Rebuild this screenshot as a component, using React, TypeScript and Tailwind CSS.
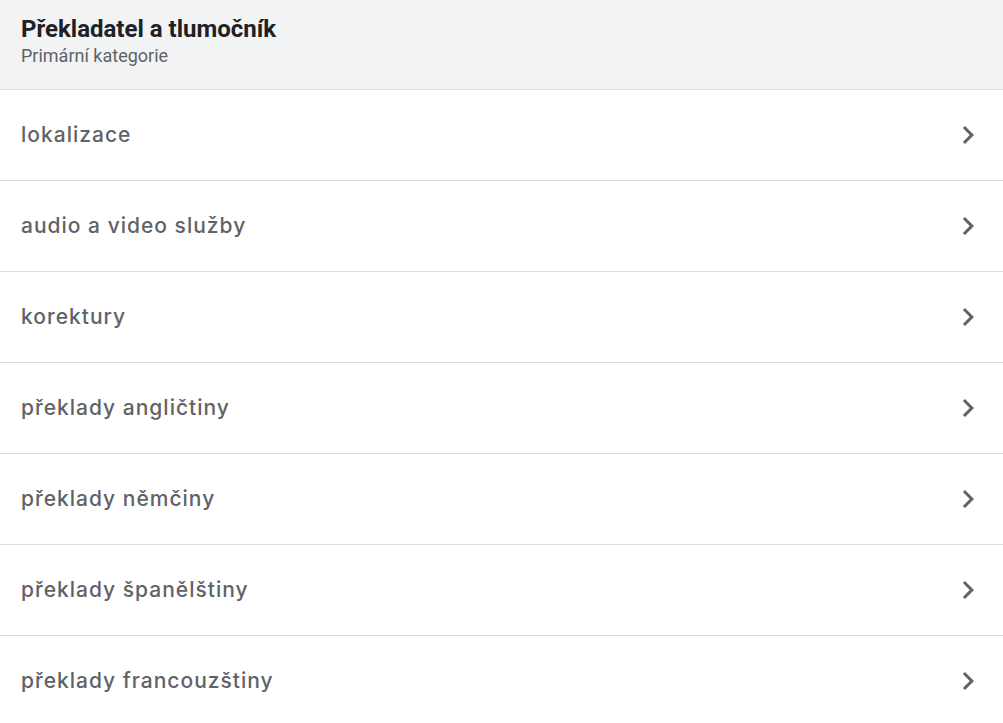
const ITEMS = [
	'lokalizace',
	'audio a video služby',
	'korektury',
	'překlady angličtiny',
	'překlady němčiny',
	'překlady španělštiny',
	'překlady francouzštiny',
]

function CategoryRow({ label }: { label: string }) {
	return (
		<div className="flex h-[91px] items-center justify-between border-b border-[#dadce0] pl-[21px] pr-[17px]">
			<span
				className="text-[21px] font-medium tracking-[1px] text-[#5f6368]"
				style={{ fontFamily: 'Inter, sans-serif' }}
			>
				{label}
			</span>
			<svg width="36" height="36" viewBox="0 0 24 24" className="text-[#5f6368]">
				<path d="M10 6L8.59 7.41 13.17 12l-4.58 4.59L10 18l6-6z" fill="currentColor" />
			</svg>
		</div>
	)
}

export default function App() {
	return (
		<div className="min-h-screen w-full bg-white" style={{ fontFamily: 'Roboto, sans-serif' }}>
			<div className="h-[90px] border-b border-[#dadce0] bg-[#f1f3f4] px-[21px] pt-[15px]">
				<div className="text-[24px] font-bold leading-[28px] text-[#202124]">Překladatel a tlumočník</div>
				<div className="mt-[2px] text-[18px] leading-[22px] text-[#5f6368]">Primární kategorie</div>
			</div>
			{ITEMS.map((item) => (
				<CategoryRow key={item} label={item} />
			))}
		</div>
	)
}
